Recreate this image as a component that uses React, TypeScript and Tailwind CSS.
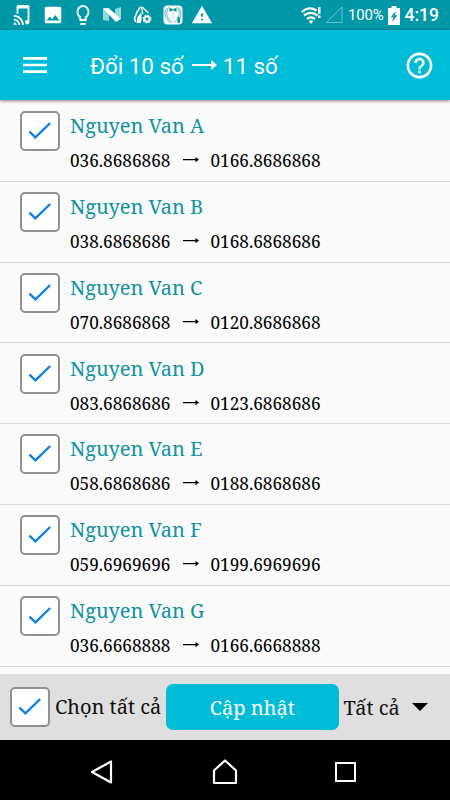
import {
  MdHelpOutline,
  MdLightbulbOutline,
  MdMenu,
  MdPhoto,
  MdTapAndPlay,
  MdWarning,
} from "react-icons/md";

interface Contact {
  name: string;
  from: string;
  to: string;
}

const contacts: Contact[] = [
  { name: "Nguyen Van A", from: "036.8686868", to: "0166.8686868" },
  { name: "Nguyen Van B", from: "038.6868686", to: "0168.6868686" },
  { name: "Nguyen Van C", from: "070.8686868", to: "0120.8686868" },
  { name: "Nguyen Van D", from: "083.6868686", to: "0123.6868686" },
  { name: "Nguyen Van E", from: "058.6868686", to: "0188.6868686" },
  { name: "Nguyen Van F", from: "059.6969696", to: "0199.6969696" },
  { name: "Nguyen Van G", from: "036.6668888", to: "0166.6668888" },
];

function CheckBox() {
  return (
    <span className="flex h-10 w-10 shrink-0 items-center justify-center rounded-[5px] border-[2.5px] border-[#919191] bg-white">
      <svg className="h-9 w-9 shrink-0" viewBox="0 0 36 36" fill="none">
        <path d="M7.4 18.6L13.4 24.4L28.2 10" stroke="#0a7fe6" strokeWidth="2.3" />
      </svg>
    </span>
  );
}

function StatusBar() {
  return (
    <div className="flex h-[30px] shrink-0 items-center justify-between bg-[#0097a7] pr-[11px] pl-[11.5px] text-white">
      <div className="flex items-center gap-2">
        <MdTapAndPlay className="h-[22px] w-[22px]" />
        <MdPhoto className="h-[22px] w-[22px]" />
        <MdLightbulbOutline className="h-6 w-[22px]" preserveAspectRatio="none" />
        {/* N logo */}
        <svg className="h-5 w-5" viewBox="0 0 20 20">
          <path d="M1 3.5L7 4V16L1 15Z" fill="#fff" fillOpacity="0.6" />
          <path d="M13 4L19 2V14L13 14Z" fill="#fff" fillOpacity="0.6" />
          <path d="M1 3.5L6.5 3L19 14L14 17Z" fill="#fff" />
        </svg>
        {/* Bag with gear */}
        <svg className="ml-[3px] h-5 w-5" viewBox="0 0 20 20" fill="none" stroke="#fff">
          <path d="M3.5 8L7 2.5H9.5L15.5 8" strokeWidth="1.4" />
          <path d="M3.8 8L1.5 13L2.5 17" strokeWidth="1.6" />
          <path d="M4.5 12L8.5 7V15L7.5 18H3.5Z" fill="#fff" stroke="none" />
          <path d="M8.5 3L10 9" strokeWidth="1.2" />
          <circle cx="14" cy="14" r="2.6" strokeWidth="1.9" />
          <circle cx="14" cy="14" r="3.8" strokeWidth="1.3" strokeDasharray="1.6 1.4" />
        </svg>
        {/* Suit */}
        <svg className="ml-[2px] h-5 w-5" viewBox="0 0 20 20">
          <rect x="0.5" y="0.5" width="19" height="19" rx="4" fill="#fff" />
          <g fill="none" stroke="#0097a7" strokeWidth="0.6">
            <path d="M6 2Q2 8 5 13L9 18" />
            <path d="M4 3Q0 9 4 14L7 18" />
            <path d="M14 2Q18 8 15 13L11 18" />
            <path d="M16 3Q20 9 16 14" />
          </g>
          <path d="M6.5 2.5L10 4.5L13.5 2.5V7L10 5.3L6.5 7Z" fill="#0097a7" />
          <circle cx="10" cy="9" r="0.6" fill="#0097a7" />
          <circle cx="10" cy="12" r="0.6" fill="#0097a7" />
          <path d="M14.5 12H17V18H14.5Z" fill="#0097a7" />
        </svg>
        <MdWarning className="h-[22px] w-[22px]" />
      </div>

      <div className="flex items-center font-[Roboto,sans-serif]">
        <svg className="h-[19px] w-5" viewBox="0 0 20 18">
          <g fill="none" stroke="#fff" strokeWidth="2.3">
            <path d="M0.8 5.5Q8 -0.8 15.5 4" />
            <path d="M3 9Q9.5 3.8 16.5 9" />
            <path d="M6 12.5Q10 9.2 14 12.5" />
          </g>
          <path d="M7.8 14.5Q10 13 12.2 14.5L10 17.5Z" fill="#fff" />
          <path d="M17 0.5H19.5V7.5H17ZM17 9H19.5V11.5H17Z" fill="#fff" />
        </svg>
        <svg className="ml-1 h-[18px] w-[18px]" viewBox="0 0 18 18">
          <path d="M1.5 16.5H17V1Z" fill="none" stroke="#fff" strokeOpacity="0.4" />
        </svg>
        <span className="ml-[5px] pt-px text-[15px] tracking-[-0.2px]">100%</span>
        <svg className="ml-[4px] h-[19px] w-[12px]" viewBox="0 0 12 19">
          <path d="M3.5 0H8.5V2H12V19H0V2H3.5Z" fill="#fff" />
          <path d="M8 5L2.7 11.3H5.5L4 16L9.5 9.2H6.7Z" fill="#0097a7" />
        </svg>
        <span className="ml-[5px] pt-px text-[17.5px] font-medium">4:19</span>
      </div>
    </div>
  );
}

function Header() {
  return (
    <div className="relative z-10 flex h-[70px] shrink-0 items-center bg-[#00bcd7] pr-[15px] pl-[19px] font-[Roboto,sans-serif] text-white shadow-[0_1px_3px_rgba(60,30,20,0.6)]">
      <MdMenu className="h-8 w-8" />
      <h1 className="ml-[39px] flex items-center pt-[3px] text-[22.4px]">
        <span>Đổi 10 số</span>
        <svg className="mr-[6px] ml-[8px] h-3 w-[25px]" viewBox="0 0 25 12">
          <path d="M0 4H19V0L25 5L19 10V6H0Z" fill="#fff" />
        </svg>
        <span>11 số</span>
      </h1>
      <MdHelpOutline className="ml-auto h-[31px] w-[31px]" />
    </div>
  );
}

function ContactRow({ contact }: { contact: Contact }) {
  return (
    <li className="flex h-[80.83px] shrink-0 gap-[10px] border-b border-[#d5d5d5] pt-[10.1px] pl-5">
      <CheckBox />
      <div>
        <div className="h-[30px] text-[20px] leading-[30px] tracking-[-0.05px] text-[#0e929f]">
          {contact.name}
        </div>
        <div className="mt-[6px] flex h-[28px] items-center text-[17.2px] leading-[28px] text-black">
          <span className="w-[100.5px]">{contact.from}</span>
          <svg className="mx-[12px] h-2 w-4 shrink-0" viewBox="0 0 16 8">
            <path d="M0 1.9H12.5V0L16 2.6L12.5 5.2V3.2H0Z" fill="#000" />
          </svg>
          <span>{contact.to}</span>
        </div>
      </div>
    </li>
  );
}

function BottomBar() {
  return (
    <div className="flex h-[66px] shrink-0 items-center bg-[#dfdfdf] pl-[10px] text-[20px] text-[#111]">
      <CheckBox />
      <span className="ml-[5px] w-[111px] whitespace-nowrap">Chọn tất cả</span>
      <button className="h-[46px] w-[172.5px] shrink-0 rounded-[7px] bg-[#00bcd7] pt-[2px] text-white">
        Cập nhật
      </button>
      <span className="ml-[5px] w-[68px] pt-px whitespace-nowrap">Tất cả</span>
      <svg className="h-2 w-4 shrink-0" viewBox="0 0 16 8">
        <path d="M0 0H16L8 8Z" fill="#000" />
      </svg>
    </div>
  );
}

function NavBar() {
  return (
    <div className="flex h-[60px] shrink-0 items-center justify-center gap-[96px] bg-black pt-1">
      <svg className="-ml-[3px] h-6 w-6" viewBox="0 0 24 24" fill="none" stroke="#fff" strokeWidth="2.2">
        <path d="M1 12L20 1.5V22.5Z" strokeLinejoin="round" />
      </svg>
      <svg className="ml-px h-[26px] w-[26px]" viewBox="0 0 26 26" fill="none" stroke="#fff" strokeWidth="2.2">
        <path d="M2 24V11.5L13 1.5L24 11.5V24Z" strokeLinejoin="round" />
      </svg>
      <svg className="-ml-px h-6 w-6" viewBox="0 0 24 24" fill="none" stroke="#fff" strokeWidth="2">
        <path d="M3 3H22V21H3Z" />
      </svg>
    </div>
  );
}

export default function App() {
  return (
    <div className="flex h-[800px] w-[450px] flex-col overflow-hidden bg-[#fafafa] font-['Noto_Serif','DejaVu_Serif_Condensed','DejaVu_Serif',serif]">
      <StatusBar />
      <Header />
      <ul className="flex min-h-0 flex-1 flex-col overflow-hidden pt-px">
        {contacts.map((contact) => (
          <ContactRow key={contact.name} contact={contact} />
        ))}
      </ul>
      <BottomBar />
      <NavBar />
    </div>
  );
}
